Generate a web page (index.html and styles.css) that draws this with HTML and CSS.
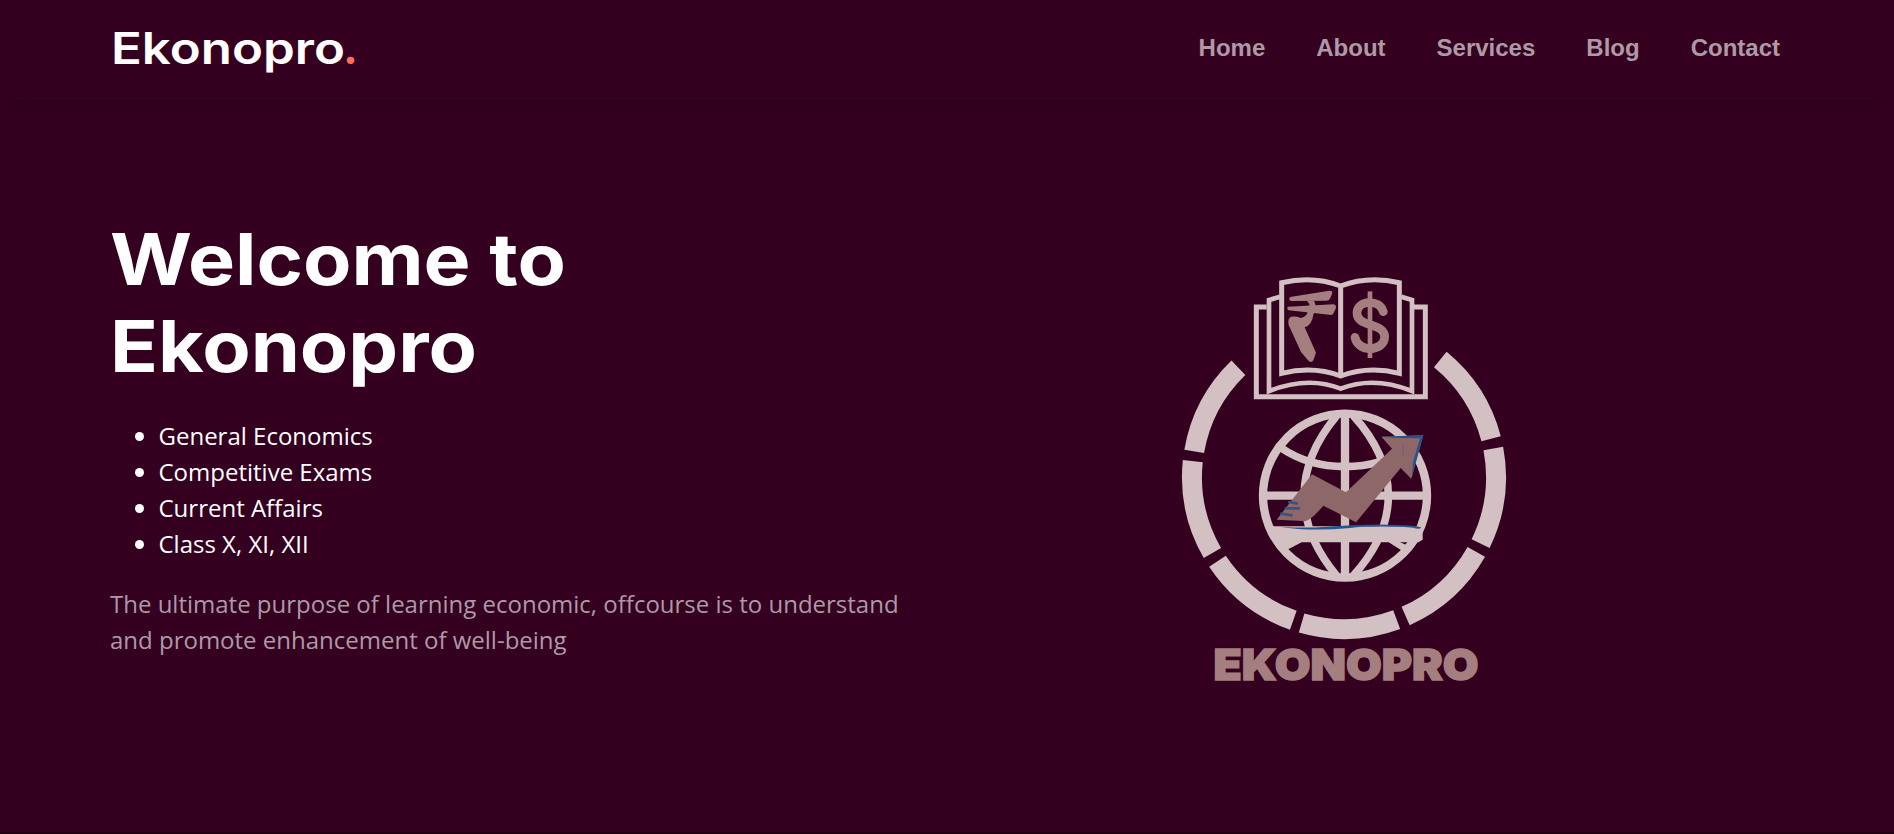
FILE: index.html
```html
<!DOCTYPE html>
<html lang="en">
<head>
<meta charset="utf-8">
<title>Ekonopro</title>
<link rel="stylesheet" href="styles.css">
</head>
<body>
<header class="header">
  <a class="brand"><svg class="brand-text" viewBox="0 0 245 70"><text x="1" y="51" textLength="234" lengthAdjust="spacingAndGlyphs">Ekonopro</text><text class="dot" x="240.5" y="51" text-anchor="middle">.</text></svg></a>
  <nav class="nav"><a>Home</a><a>About</a><a>Services</a><a>Blog</a><a>Contact</a></nav>
</header>
<main class="hero">
  <section class="copy">
    <h1 class="title"><svg class="title-text" viewBox="0 0 480 174"><text x="0" y="64" textLength="456" lengthAdjust="spacingAndGlyphs">Welcome to</text><text x="0" y="151" textLength="367" lengthAdjust="spacingAndGlyphs">Ekonopro</text></svg></h1>
    <ul class="topics"><li>General Economics</li><li>Competitive Exams</li><li>Current Affairs</li><li>Class X, XI, XII</li></ul>
    <p class="lead">The ultimate purpose of learning economic, offcourse is to understand and promote enhancement of well-being</p>
  </section>
  <figure class="emblem">
    <svg class="emblem-art" viewBox="1170 265 350 430">
      <!-- segmented ring -->
      <g class="line" stroke-width="20">
        <path d="M1238.4 368.7A152 152 0 0 0 1194.2 452.4"/>
        <path d="M1192.8 462.1A152 152 0 0 0 1212.4 554"/>
        <path d="M1217.5 562.3A152 152 0 0 0 1293.3 621.3"/>
        <path d="M1301.6 624A152 152 0 0 0 1396.7 620.6"/>
        <path d="M1405.6 617A152 152 0 0 0 1476.3 552.8"/>
        <path d="M1480.6 544.6A152 152 0 0 0 1493.3 449.5"/>
        <path d="M1491.1 439.7A152 152 0 0 0 1440.3 360.4"/>
      </g>
      <!-- open book with currency signs -->
      <g transform="translate(1230 265.7) scale(.33333)">
        <g class="line" stroke-width="15">
          <path d="M155 54Q250 32 332 64Q415 32 508 54V326Q415 303 332 334Q250 303 155 326ZM332 64V334"/>
          <path d="M150 96L117 106V379Q235 333 332 372Q430 333 546 379V106L514 96" stroke-width="14"/>
          <path d="M110 127H79V396H586V127H552"/>
        </g>
        <g class="brown">
          <path d="M180 97L298 78Q310 78 306 88L300 102Q297 108 288 108L184 109Q174 107 180 97ZM174 126L310 119Q321 121 317 132L309 148Q305 152 298 150L176 137Q169 132 174 126Z"/>
          <path d="M184 156Q204 154 212 160Q232 156 233 140Q246 125 231 108H252Q262 126 250 150Q246 181 224 188L258 264L250 287Q243 297 234 287L213 262L176 181Q172 160 184 156Z"/>
          <path class="dollar" d="M460 141C448 102 384 106 381 143C379 190 464 171 464 217C462 261 384 265 375 218"/>
          <path d="M413 80H427V280H413Z"/>
        </g>
      </g>
      <!-- globe with rising arrow -->
      <g transform="translate(1240 400) scale(.33333)">
        <g class="line" stroke-width="25">
          <circle cx="315" cy="290" r="246"/>
          <path d="M315 45V540M65 290H565"/>
          <path d="M122 146Q205 203 315 203Q425 203 508 146" stroke-width="23"/>
          <path d="M290 50C160 205 160 375 290 530M340 50C480 205 480 375 340 530" stroke-width="23"/>
        </g>
        <path class="pale" d="M90 382H544L548 395V422L535 430H480L505 440L484 454L446 430H185L146 450L105 430Z"/>
        <path class="arrow" d="M110 362L216 226L318 280L456 149L424 113L550 109L514 239L482 207L348 370L250 320Q207 371 190 366Z"/>
        <path class="blue" d="M424 113L550 109L516 232L519 190L540 118L470 117ZM120 383Q190 388 250 384Q390 373 470 378Q528 378 545 386Q535 392 520 386Q400 379 330 387Q210 398 120 383Z"/>
        <path class="hatch" d="M145 309L174 314M134 328H180M121 344L158 349"/>
        <path class="hatch hatch-thin" d="M490 135V170"/>
      </g>
      <text class="emblem-name" x="1213.5" y="680.5" textLength="265" lengthAdjust="spacingAndGlyphs">EKONOPRO</text>
    </svg>
  </figure>
</main>
<footer class="next"></footer>
</body>
</html>
```
FILE: styles.css
```css
* { box-sizing: border-box; }
body { margin: 0; height: 834px; overflow: hidden; background: #350020; color: #fff; font: 24px/36px "Open Sans", sans-serif; }
.header { height: 100px; padding: 13px 114px 0 110px; display: flex; justify-content: space-between; box-shadow: 0 10px 20px -10px rgba(0,0,0,.28); }
.brand-text { display: block; overflow: visible; width: 245px; height: 70px; font: 600 44px Inter, sans-serif; fill: #fff; }
.dot { font: 900 46px Lato, sans-serif; fill: #ff6f5b; }
.nav { display: flex; gap: 51px; padding-top: 17px; font: bold 24px/36px "Liberation Sans", Arial, sans-serif; color: #ae99a6; }
.hero { height: 732px; display: flex; justify-content: space-between; padding: 121px 374px 0 110px; }
.copy { width: 830px; }
.title { margin: 0 0 23px; }
.title-text { display: block; overflow: visible; width: 480px; height: 174px; font: 700 71px/86px Inter, sans-serif; fill: #fff; }
.topics { margin: 0 0 24px; padding: 0 0 0 48.5px; }
.lead { margin: 0; color: #ae99a6; }
.emblem { margin: 43px 0 0; }
.emblem-art { display: block; width: 350px; height: 430px; }
.line { fill: none; stroke: #d3c0c2; }
.pale { fill: #d3c0c2; }
.brown { fill: #a57f7f; }
.dollar { fill: none; stroke: #a57f7f; stroke-width: 26; stroke-linecap: round; }
.arrow { fill: #8e6868; }
.blue { fill: #25558e; }
.hatch { fill: none; stroke: #355683; stroke-width: 8; }
.hatch-thin { stroke: #6d6580; stroke-width: 4; }
.emblem-name { font: 900 43px Inter, sans-serif; fill: #a57f7f; stroke: #a57f7f; stroke-width: 1.5px; }
.next { height: 2px; background: #210014; }
```
